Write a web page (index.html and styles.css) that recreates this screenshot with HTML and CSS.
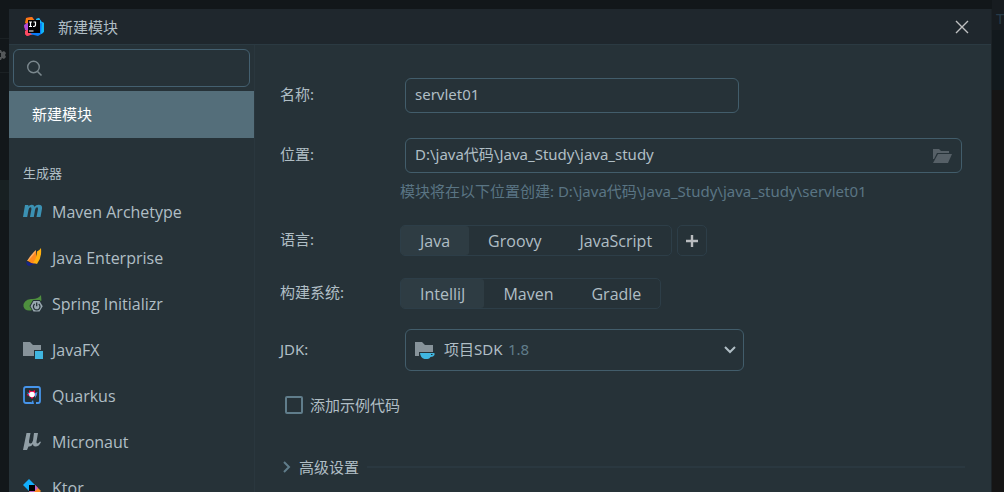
FILE: index.html
```html
<!DOCTYPE html>
<html lang="zh-CN">
<head>
<meta charset="utf-8">
<title>新建模块</title>
<link rel="stylesheet" href="styles.css">
</head>
<body>
<div class="backdrop" aria-hidden="true">
  <div class="backdrop-left">
    <svg class="gear" width="6" height="12" viewBox="0 0 6 12"><path d="M0 1h1l1 2 2-1 2 2-1 2 1 2-2 2-2-1-1 2H0V8h1V4H0z" fill="#54585a"/></svg>
    <div class="backdrop-row"></div>
  </div>
  <div class="backdrop-right"><span>T</span></div>
</div>
<main class="dialog">
  <header class="titlebar">
    <svg width="20" height="20" viewBox="0 0 20 20">
      <path d="M2 1l6-1 3 4-1 13-7 2-2-2 1-5-2-2 2-3z" fill="#fe315d"/>
      <path d="M2 1l6-1 3 4-8 3-2-1z" fill="#f97a12"/>
      <path d="M0 8l5-3v8l-4 0z" fill="#b04bd8"/>
      <path d="M1 14l5-2 3 5-6 2-2-2z" fill="#fd4b62"/>
      <path d="M12 2l3-1 3 4 2 1-1 10-5 3-8-2 8-5z" fill="#087cfa"/>
      <path d="M12 2l3-1 3 5-5 1z" fill="#20bdf5"/>
      <path d="M18 5l2 1v9l-3 2z" fill="#12b8f5"/>
      <rect x="4" y="3" width="12" height="13" fill="#050203"/>
      <path d="M5 5h3M6.500 5v4.500M5 9.500h3M9.500 5h2v3q0 1.500-2.500 1.500M5 14h4.500" fill="none" stroke="#fff" stroke-width="1.200"/>
    </svg>
    <h1 class="title">新建模块</h1>
    <button class="close" type="button" aria-label="关闭"><svg width="14" height="14" viewBox="0 0 14 14"><path d="M1 1l12 12M13 1L1 13" stroke="#bfc0c1" stroke-width="1.400"/></svg></button>
  </header>
  <div class="body">
    <nav class="sidebar">
      <label class="search">
        <svg width="17" height="17" viewBox="0 0 17 17"><circle cx="7.500" cy="7" r="5.800" fill="none" stroke="#7b888e" stroke-width="1.400"/><path d="M11.500 11.500l4 4" stroke="#7b888e" stroke-width="1.600"/></svg>
        <input type="text" aria-label="搜索">
      </label>
      <a class="module" href="#new">新建模块</a>
      <h2 class="group">生成器</h2>
      <ul class="generators">
        <li><a href="#maven"><svg width="20" height="20" viewBox="0 0 20 20"><path d="M2 3h3.500l-.3 1.500Q7 2.500 9 2.700q2 .1 2.400 2Q13.200 2.600 15.700 2.700q4 .2 3.300 4L17.500 15h-4l1.500-7.700q.3-2-1-2-1.500 0-2 2.700L10.800 15H7l1.400-7.700q.3-2-1-2Q6 5.300 5.500 8L4.200 15H0z" fill="#3b91b3"/></svg>Maven Archetype</a></li>
        <li><a href="#enterprise"><svg width="20" height="20" viewBox="0 0 20 20"><path d="M4 13Q9 5 13 2v11z" fill="#ffae61"/><path d="M5 13Q11 7 13 3l1 12-4 1z" fill="#ff8a1d"/><path d="M10 15Q14 10 14 3.500 16 3 18 0q1 10-4 16z" fill="#ffb10f"/><path d="M3 13.500l4 1.500 7 1-4 .500L6 18l-2-1z" fill="#172387"/></svg>Java Enterprise</a></li>
        <li><a href="#spring"><svg width="20" height="20" viewBox="0 0 20 20"><path d="M18 1q1 5-.5 8l-8 7Q2 18 .500 12.500 0 6 8 5q7 .5 10-4z" fill="#4e8f3e"/><path d="M10 6h7l3.500 5.500L17 18h-7l-3.500-6z" fill="#263238"/><path d="M10.500 7h6l3.200 5.200-3.200 5.300h-6L7.500 12.200z" fill="#99a8b0"/><path d="M11.700 10a3.300 3.300 0 1 0 4 0M13.700 8.500v3.800" fill="none" stroke="#263238" stroke-width="1.300"/></svg>Spring Initializr</a></li>
        <li><a href="#javafx"><svg width="20" height="20" viewBox="0 0 20 20"><path d="M0 2h7l3 3h8v5h-7v6H0z" fill="#87939a"/><path d="M12 11h8v8h-8z" fill="#40b6e0"/></svg>JavaFX</a></li>
        <li><a href="#quarkus"><svg width="20" height="20" viewBox="0 0 20 20"><path d="M8 17H3q-2 0-2-2V3q0-2 2-2h12q2 0 2 2v12q0 2-2 2h-2" fill="none" stroke="#4695eb" stroke-width="1.800"/><path d="M7 18l3-4 1 4z" fill="#4695eb"/><path d="M6 4l3 1.500L12 4v3l2.500 2-3 1L9 13l-2.500-3-3-1L6 7z" fill="#ff004a"/><path d="M12 4v3l2.500-1-1 3.500L12 12V9zM6 12V9L4 6.500 7 7z" fill="#4695eb"/><circle cx="9" cy="8.500" r="2.800" fill="#fff"/></svg>Quarkus</a></li>
        <li><a href="#micronaut"><svg width="20" height="20" viewBox="0 0 20 20"><path d="M3.500 1h4L6 9q-.3 3 1.500 2.500 2-.5 2.500-3L11 1h4l-1.500 8.500q-.3 2 .8 2 1.200 0 2.700-2l1 .5q-2 4.500-5.500 4.500Q10 14.500 10 12q-2 3-4.500 2.500L4 18H0z" fill="#919fa6"/></svg>Micronaut</a></li>
        <li><a href="#ktor"><svg width="20" height="20" viewBox="0 0 20 20"><path d="M0 7l6-6 6 6-6 6z" fill="#12aefc"/><path d="M6 13l6-6 6 6-6 6z" fill="#ff8a27"/><path d="M12 7l3 3-6 6-3-3z" fill="#bc60cb"/><path d="M6 7h6v6H6z" fill="#000"/></svg>Ktor</a></li>
      </ul>
    </nav>
    <form class="form">
      <div class="row name-row">
        <label for="name">名称:</label>
        <input class="box name" id="name" type="text" value="servlet01">
      </div>
      <div class="row">
        <label for="location">位置:</label>
        <div class="box path">
          <input id="location" type="text" value="D:\java代码\Java_Study\java_study">
          <button type="button" aria-label="浏览"><svg width="20" height="16" viewBox="0 0 20 16"><path d="M1 1h6l2 2h8v2H5l-3 6-1 0z" fill="#566067"/><path d="M6 6h14l-4 9H1z" fill="#566067"/></svg></button>
        </div>
      </div>
      <p class="hint">模块将在以下位置创建: D:\java代码\Java_Study\java_study\servlet01</p>
      <div class="row language">
        <span>语言:</span>
        <div class="choices">
          <div class="segments"><button class="selected" type="button">Java</button><button type="button">Groovy</button><button type="button">JavaScript</button></div>
          <button class="add" type="button" aria-label="添加语言"><svg width="14" height="14" viewBox="0 0 14 14"><path d="M7 1v12M1 7h12" stroke="#b9bcbf" stroke-width="2.400"/></svg></button>
        </div>
      </div>
      <div class="row build">
        <span>构建系统:</span>
        <div class="choices">
          <div class="segments"><button class="selected" type="button">IntelliJ</button><button type="button">Maven</button><button type="button">Gradle</button></div>
        </div>
      </div>
      <div class="row">
        <label for="jdk">JDK:</label>
        <div class="sdk">
          <select class="box" id="jdk"><option>项目SDK</option></select>
          <div class="sdk-face">
            <svg width="20" height="20" viewBox="0 0 20 20"><path d="M0 2h7l3 3h8v7H4v4H0z" fill="#87939a"/><path d="M5 13h14q1 0 .5 2-1 2-4 2-1 2-3 2h-3q-4-1-4.500-6z" fill="#40b6e0"/><path d="M16 14h2l-1 1h-1z" fill="#263238"/></svg>
            <span class="version">1.8</span>
            <svg class="arrow" width="12" height="8" viewBox="0 0 12 8"><path d="M1 1l5 5 5-5" fill="none" stroke="#b0bec5" stroke-width="2"/></svg>
          </div>
        </div>
      </div>
      <label class="check"><input type="checkbox">添加示例代码</label>
      <button class="advanced" type="button"><svg width="8" height="12" viewBox="0 0 8 12"><path d="M1 1l5 5-5 5" fill="none" stroke="#607d8b" stroke-width="2"/></svg>高级设置</button>
    </form>
  </div>
</main>
</body>
</html>
```
FILE: styles.css
```css
* { box-sizing: border-box; }
body {
  margin: 0;
  height: 100vh;
  overflow: hidden;
  padding: 9px 12px 0 9px;
  background: #12171a;
  color: #b0bec5;
  font: 15px/20px "Noto Sans", "Noto Sans CJK SC", sans-serif;
}
button, input, select { font: inherit; color: inherit; }
button { border: 0; padding: 0; background: none; }
input { border: 0; padding: 0; min-width: 0; background: none; outline: 0; }
svg { flex: none; display: block; }
a { color: inherit; text-decoration: none; }

.backdrop { position: absolute; inset: 0; display: flex; justify-content: space-between; z-index: -1; }
.backdrop-left { width: 9px; padding-top: 38px; background: linear-gradient(#12171a 38px, #1b2124 38px 39px, #12171a 39px 72px, #1b2124 72px 73px, #12171a 73px); }
.gear { height: 34px; }
.backdrop-row { height: 30px; margin-top: 108px; background: #182022; }
.backdrop-right { width: 12px; padding: 8px 0 0 4px; overflow: hidden; color: #263b49; background: linear-gradient(#171c20 30px, #12191d 30px 90px, #151515 90px); }

.dialog { height: 100%; overflow: hidden; display: flex; flex-direction: column; background: #263238; border-right: 1px solid #1b2226; }
.titlebar { flex: none; display: flex; align-items: center; height: 36px; padding: 0 22px 0 15px; gap: 14px; background: #1f272d; border-bottom: 1px solid #2b3a42; }
.title { margin: 0; font-size: 15px; font-weight: 400; }
.close { margin-left: auto; }
.body { flex: 1; display: flex; min-height: 0; }

.sidebar { flex: none; width: 246px; border-right: 1px solid #2a373e; }
.search { display: flex; align-items: center; gap: 8px; height: 38px; margin: 4px; padding: 0 12px; border: 1px solid #446070; border-radius: 6px; }
.search input { flex: 1; }
.module { display: block; padding: 14px 23px; line-height: 19px; background: #546e7a; color: #fff; }
.group { margin: 25px 14px 6px; font-size: 13px; font-weight: 400; line-height: 20px; }
.generators { margin: 0; padding: 0; list-style: none; font-family: "Open Sans", sans-serif; font-size: 16px; }
.generators a { display: flex; align-items: center; gap: 9px; height: 46px; padding-left: 14px; }

.form { flex: 1; min-width: 0; padding: 33px 26px 0 25px; }
.row { display: grid; grid-template-columns: 120px 1fr; align-items: center; }
.row > label, .row > span { padding-bottom: 3px; }
.box { height: 35px; margin: 0 4px 0 5px; border: 1px solid #425d6b; border-radius: 6px; background: #263238; }
.name-row { margin-bottom: 25px; }
.name { width: 334px; padding: 0 9px 3px; }
.path { display: flex; align-items: center; margin-right: 3px; padding: 0 9px; }
.path input { flex: 1; padding-bottom: 3px; }
.hint { margin: 8px 0 24px 120px; color: #5a7584; }
.language { margin-bottom: 22px; }
.build { margin-bottom: 20px; }
.choices { display: flex; gap: 5px; }
.segments, .add { height: 31px; border: 1px solid #2d3e48; border-radius: 5px; }
.segments { display: flex; }
.segments button { padding: 0 19px; font-family: "Open Sans", sans-serif; font-size: 16px; }
.segments .selected { background: #2e3c43; border-radius: 3px; }
.add { display: grid; place-items: center; width: 30px; }
.sdk { display: grid; width: 348px; }
.sdk > * { grid-area: 1 / 1; }
.sdk select { height: 42px; padding: 0 0 2px 38px; appearance: none; outline: 0; }
.sdk-face { display: flex; align-items: center; padding: 0 8px 0 15px; pointer-events: none; }
.version { margin-left: 73px; padding-bottom: 2px; color: #607d8b; }
.arrow { margin-left: auto; margin-right: 4px; }
.check { display: flex; align-items: center; gap: 7px; width: max-content; margin: 24px 0 0 5px; }
.check input { appearance: none; width: 18px; height: 18px; margin: 0; border: 2px solid #607d8b; border-radius: 2px; }
.advanced { display: flex; align-items: center; gap: 8px; width: 100%; margin-top: 42px; padding-left: 3px; }
.advanced::after { content: ""; flex: 1; height: 2px; background: #2a3840; }
```
